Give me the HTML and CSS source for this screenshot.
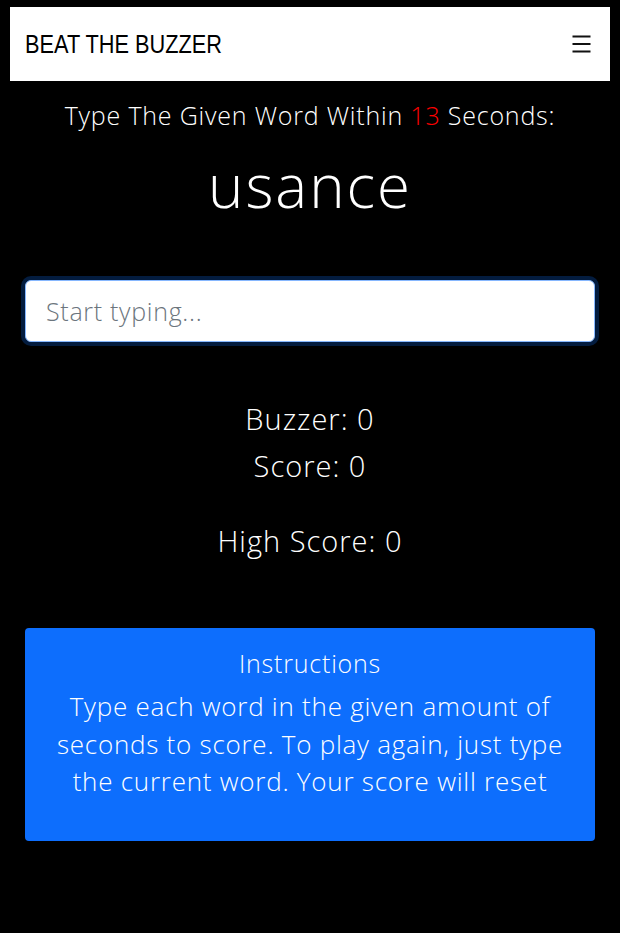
FILE: index.html
```html
<!DOCTYPE html>
<html lang="en">
<head>
<meta charset="utf-8">
<title>Beat The Buzzer</title>
<link rel="stylesheet" href="styles.css">
</head>
<body>
<nav class="navbar">
  <span class="brand">BEAT THE BUZZER</span>
  <span class="toggler" aria-label="menu">
    <svg width="19" height="18" viewBox="0 0 19 18"><path d="M0.5 1.5h18M0.5 9h18M0.5 16.5h18" stroke="#111" stroke-width="2"/></svg>
  </span>
</nav>
<main class="game">
  <p class="prompt">Type The Given Word Within <span class="secs">13</span> Seconds:</p>
  <h1 class="word">usance</h1>
  <div class="input-wrap">
    <input class="word-input" type="text" placeholder="Start typing...">
  </div>
  <div class="stats">
    <p class="stat">Buzzer: 0</p>
    <p class="stat">Score: 0</p>
  </div>
  <p class="stat high">High Score: 0</p>
  <section class="instructions">
    <h2 class="inst-title">Instructions</h2>
    <p class="inst-text">Type each word in the given amount of seconds to score. To play again, just type the current word. Your score will reset</p>
  </section>
</main>
</body>
</html>
```
FILE: styles.css
```css
html, body {
  margin: 0;
  padding: 0;
  background: #000;
}
body {
  padding: 7px 10px 0;
  font-family: "Open Sans", "Noto Sans", sans-serif;
  font-weight: 300;
  color: #fff;
}
.navbar {
  background: #fff;
  height: 74px;
  display: flex;
  align-items: center;
  justify-content: space-between;
  padding: 0 19px 0 15px;
}
.brand {
  font-family: "Liberation Sans", sans-serif;
  font-weight: 400;
  font-size: 25px;
  color: #000;
  transform: scaleX(0.87);
  transform-origin: left center;
}
.toggler {
  display: flex;
  align-items: center;
  margin-top: -1px;
}
.game {
  padding: 0 15px;
  text-align: center;
}
.prompt {
  margin: 18px 0 0;
  font-size: 25px;
  letter-spacing: 0.8px;
  line-height: 32px;
}
.secs { color: #ff0000; }
.word {
  margin: 19px 0 0;
  font-size: 60px;
  letter-spacing: 2px;
  font-weight: 300;
  line-height: 70px;
}
.input-wrap {
  margin-top: 60px;
}
.word-input {
  display: block;
  box-sizing: border-box;
  width: 100%;
  height: 62px;
  border: 1px solid #86b7fe;
  border-radius: 6px;
  box-shadow: 0 0 0 4px rgba(13, 110, 253, 0.25);
  outline: none;
  padding: 0 20px;
  font-family: "Open Sans", sans-serif;
  font-weight: 300;
  font-size: 25px;
  letter-spacing: 0.7px;
  color: #212529;
  background: #fff;
}
.word-input::placeholder { color: #6c757d; }
.stats { margin-top: 53px; }
.stat {
  margin: 0;
  font-size: 29px;
  letter-spacing: 1px;
  line-height: 47px;
}
.high { margin-top: 28px; }
.instructions {
  margin-top: 64px;
  background: #0d6efd;
  border-radius: 4px;
  padding: 19px 20px 40px;
}
.inst-title {
  margin: 0;
  font-size: 25px;
  letter-spacing: 0.8px;
  font-weight: 300;
  line-height: 32px;
}
.inst-text {
  margin: 9px 0 0;
  font-size: 26px;
  letter-spacing: 0.75px;
  line-height: 37.5px;
}
```
